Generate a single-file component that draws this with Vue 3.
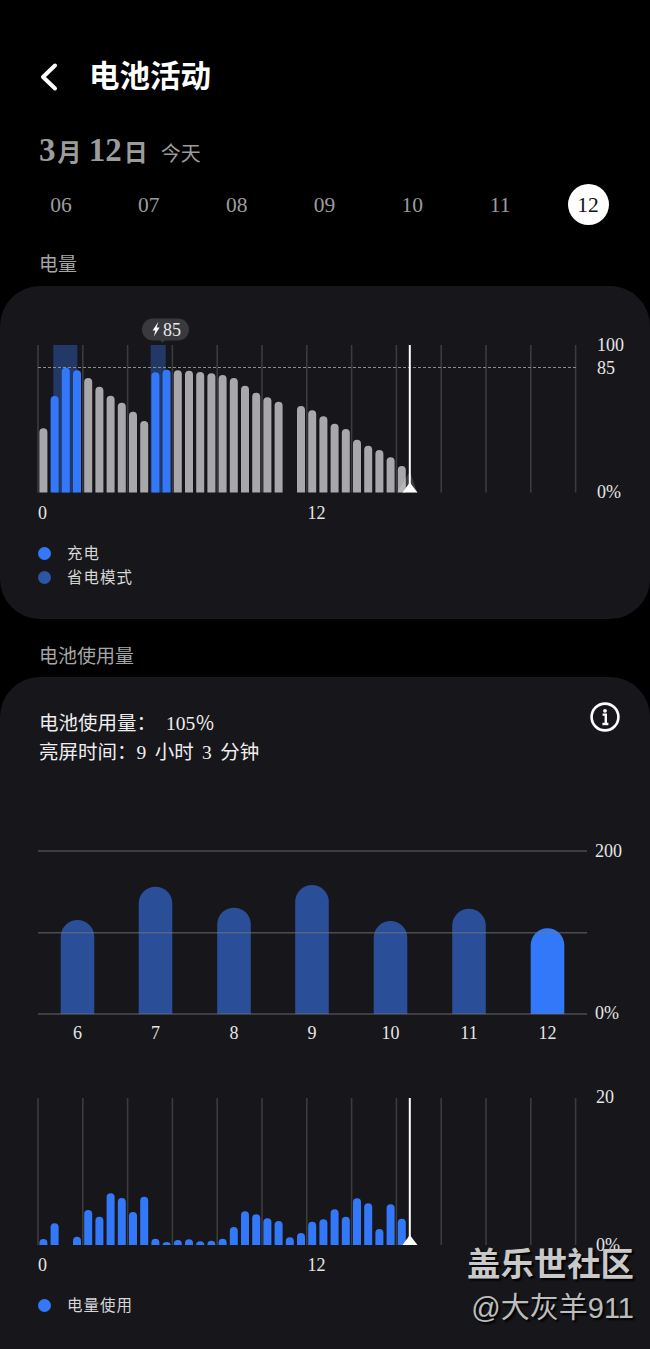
<script setup>
const days = ['06', '07', '08', '09', '10', '11', '12']

const gridX = Array.from({ length: 13 }, (_, i) => 38 + i * 44.8)

// y of each half-hour bar top, null = no data
const levelTops = [428.3, 396, 367.7, 370.3, 378, 386.7, 395.7, 402.7, 411.7, 421, 372.3, 369.7, 370.3, 370.7, 372, 373.3, 375, 378, 385.7, 392.7, 397.3, 401.7, null, 406, 410.3, 416.3, 423.7, 429, 439.7, 445.7, 450, 457.3, 466]
const chargingIdx = [1, 2, 3, 10, 11]

const usageTops = [1239, 1223.3, null, 1236.7, 1210, 1216.7, 1193.3, 1198, 1212, 1196.7, 1238.7, 1242, 1240, 1239.3, 1241.3, 1240.7, 1238.7, 1227, 1211.3, 1214.3, 1218.3, 1221, 1237.3, 1233, 1221.7, 1219.3, 1209.3, 1216.7, 1198.3, 1203.3, 1229, 1204.3, 1218.7]

const weekBars = [
  { label: '6', x: 77.5, top: 920 },
  { label: '7', x: 155.5, top: 886.7 },
  { label: '8', x: 234, top: 907.7 },
  { label: '9', x: 312, top: 885 },
  { label: '10', x: 390.5, top: 921 },
  { label: '11', x: 469, top: 908.7 },
  { label: '12', x: 547.5, top: 928.3, current: true },
]

function roundTop(cx, top, base, w) {
  const r = w / 2
  const x = cx - r
  const h = Math.min(r, base - top)
  return `M${x} ${base}V${top + h}A${r} ${h} 0 0 1 ${x + w} ${top + h}V${base}Z`
}

function halfHourBars(tops, base) {
  return tops
    .map((top, i) => (top === null ? null : { i, d: roundTop(43.4 + i * 11.2, top, base, 8) }))
    .filter(Boolean)
}

const levelBars = halfHourBars(levelTops, 492.5)
const usageBars = halfHourBars(usageTops, 1245)
</script>

<template>
  <div class="page">
    <div class="header">
      <svg class="back" width="20" height="30" viewBox="0 0 20 30">
        <path d="M16 3.5 4 15 16 26.5" fill="none" stroke="#fff" stroke-width="4" stroke-linecap="round" stroke-linejoin="round" />
      </svg>
      <span class="title">电池活动</span>
    </div>

    <div class="date-row">
      <span class="date">3<span class="date-cjk">月</span> 12<span class="date-cjk">日</span></span>
      <span class="today">今天</span>
    </div>

    <div class="day-strip">
      <div v-for="d in days" :key="d" class="day">
        <span :class="{ active: d === '12' }">{{ d }}</span>
      </div>
    </div>

    <div class="section-title">电量</div>
    <section class="card level-card">
      <svg class="chart" width="650" height="210" viewBox="0 314 650 210">
        <rect x="53.3" y="345" width="24" height="147.5" fill="#2a4f98" opacity=".62" />
        <rect x="150.7" y="345" width="15" height="147.5" fill="#2a4f98" opacity=".62" />
        <line v-for="x in gridX" :key="x" :x1="x" :x2="x" y1="345" y2="492.5" stroke="#3b3b3f" stroke-width="1.6" />
        <path v-for="b in levelBars" :key="b.i" :d="b.d" :fill="chargingIdx.includes(b.i) ? '#3478fa' : '#a8a8ac'" />
        <line x1="38" x2="576" y1="367.5" y2="367.5" stroke="#8c8c8c" stroke-width="1" stroke-dasharray="3 2" />

        <polygon points="410,471 397,492.5 417,492.5" fill="#fff" opacity=".16" />
        <line x1="409.8" x2="409.8" y1="345" y2="490" stroke="#fff" stroke-width="2" />
        <polygon points="409.8,482.5 402.5,492.5 417.5,492.5" fill="#fff" />

        <rect x="142" y="318.5" width="47" height="22" rx="11" fill="#3a3a3e" />
        <path d="M165 340h-5l2.5 3z" fill="#3a3a3e" />
        <path d="M158.4 321.8 152.6 330.4H155.4L153.8 336.4 159.6 327.6H156.6Z" fill="#fff" />
        <text class="tip" x="163" y="336">85</text>

        <text class="tick" x="597" y="351">100</text>
        <text class="tick" x="597" y="373.5">85</text>
        <text class="tick" x="597" y="498">0%</text>
        <text class="tick" x="38" y="519">0</text>
        <text class="tick" x="307.5" y="519">12</text>
      </svg>
      <ul class="legend">
        <li><i class="dot"></i>充电</li>
        <li><i class="dot dim"></i>省电模式</li>
      </ul>
    </section>

    <div class="section-title second">电池使用量</div>
    <section class="card usage-card">
      <div class="summary">
        <div>
          <div>电池使用量： <span class="gap">105％</span></div>
          <div class="screen-time">亮屏时间：9 小时 3 分钟</div>
        </div>
        <svg class="info" width="30" height="30" viewBox="0 0 30 30">
          <circle cx="15" cy="15" r="13.4" fill="none" stroke="#fff" stroke-width="2.6" />
          <circle cx="15" cy="8.8" r="1.9" fill="#fff" />
          <path d="M12.6 12.6H15.8V21.6M12.4 22H18.4" fill="none" stroke="#fff" stroke-width="2.4" />
        </svg>
      </div>

      <svg class="chart week" width="650" height="205" viewBox="0 840 650 205">
        <path v-for="b in weekBars" :key="b.label" :d="roundTop(b.x, b.top, 1014, 33.6)" :fill="b.current ? '#3478fa' : '#2a4f98'" />
        <line v-for="y in [851, 932.7, 1014]" :key="y" x1="38" x2="587" :y1="y" :y2="y" stroke="#77777c" stroke-opacity=".55" stroke-width="1.4" />
        <text class="tick" x="595" y="856.5">200</text>
        <text class="tick" x="595" y="1019">0%</text>
        <text v-for="b in weekBars" :key="'l' + b.label" class="tick mid" :x="b.x" y="1039">{{ b.label }}</text>
      </svg>

      <svg class="chart day-usage" width="650" height="190" viewBox="0 1085 650 190">
        <line v-for="x in gridX" :key="x" :x1="x" :x2="x" y1="1098" y2="1245" stroke="#3b3b3f" stroke-width="1.6" />
        <path v-for="b in usageBars" :key="b.i" :d="b.d" fill="#3478fa" />
        <line x1="409.8" x2="409.8" y1="1098" y2="1243" stroke="#fff" stroke-width="2" />
        <polygon points="409.8,1235 402.5,1245 417.5,1245" fill="#fff" />
        <text class="tick" x="596" y="1103">20</text>
        <text class="tick" x="596" y="1251">0%</text>
        <text class="tick" x="38" y="1270.5">0</text>
        <text class="tick" x="307.5" y="1270.5">12</text>
      </svg>

      <ul class="legend usage-legend">
        <li><i class="dot"></i>电量使用</li>
      </ul>
    </section>

    <div class="watermark">
      <div class="wm-top">盖乐世社区</div>
      <div class="wm-user">@大灰羊911</div>
    </div>
  </div>
</template>

<style>
html, body {
  background: #000;
}
</style>

<style scoped>
.page {
  position: relative;
  display: flex;
  flex-direction: column;
  width: 650px;
  height: 1349px;
  overflow: hidden;
  background: #000;
  font-family: "Liberation Serif", "Noto Sans CJK SC", serif;
  color: #fff;
}
.header {
  display: flex;
  align-items: center;
  height: 50px;
  margin-top: 52px;
  padding-left: 39px;
}
.back {
  display: block;
}
.title {
  margin-left: 30px;
  font-size: 30.5px;
  font-weight: 700;
  line-height: 50px;
}
.date-row {
  display: flex;
  align-items: baseline;
  height: 40px;
  margin-top: 28px;
  padding-left: 39px;
  line-height: 40px;
  color: #9c9c9c;
}
.date {
  font-size: 33px;
  font-weight: 700;
  word-spacing: -1px;
}
.date-cjk {
  margin-left: 2px;
  font-size: 24px;
}
.today {
  margin-left: 13px;
  font-size: 20px;
}
.day-strip {
  display: grid;
  grid-template-columns: repeat(7, 1fr);
  height: 41px;
  margin-top: 14px;
  padding: 0 18px 0 17px;
}
.day {
  display: flex;
  align-items: center;
  justify-content: center;
  font-size: 21.5px;
  color: #9c9c9c;
}
.day span:not(.active) {
  padding-top: 2px;
}
.active {
  width: 41px;
  height: 41px;
  border-radius: 50%;
  background: #fff;
  color: #111;
  line-height: 42px;
  text-align: center;
}
.section-title {
  height: 26px;
  margin-top: 27px;
  padding-left: 39px;
  font-size: 19px;
  line-height: 26px;
  color: #a6a6a6;
}
.section-title.second {
  margin-top: 25px;
}
.card {
  margin-top: 8px;
  background: #17171b;
  border-radius: 40px;
}
.level-card {
  height: 333px;
  padding-top: 28px;
  box-sizing: border-box;
}
.usage-card {
  flex: 1;
  margin-top: 7px;
  padding-top: 32px;
  border-radius: 40px 40px 0 0;
}
.chart {
  display: block;
}
.tick {
  font-size: 18px;
  fill: #e6e6e6;
}
.mid {
  text-anchor: middle;
}
.tip {
  font-size: 18px;
  fill: #e8e8e8;
}
.legend {
  margin: 18px 0 0;
  padding: 0 0 0 38px;
  list-style: none;
  font-size: 15.5px;
  line-height: 23.5px;
  letter-spacing: 1px;
  color: #d6d6d6;
}
.legend li {
  display: flex;
  align-items: center;
}
.dot {
  width: 13px;
  height: 13px;
  margin-right: 16px;
  border-radius: 50%;
  background: #3478fa;
}
.dot.dim {
  background: #2d55a5;
}
.summary {
  display: flex;
  justify-content: space-between;
  align-items: flex-start;
  padding: 0 30px 0 39px;
  font-size: 19.5px;
  line-height: 29px;
  color: #eee;
}
.screen-time {
  word-spacing: 3.5px;
}
.gap {
  margin-left: 5px;
}
.info {
  margin-top: -7px;
}
.week {
  margin-top: 73px;
}
.day-usage {
  margin-top: 40px;
}
.usage-legend {
  margin-top: 19px;
}
.watermark {
  position: absolute;
  top: 1245px;
  right: 16px;
  text-align: right;
  font-family: "Liberation Sans", "Noto Sans CJK SC", sans-serif;
  text-shadow: 2px 2px 2px #000;
}
.wm-top {
  font-size: 33.4px;
  font-weight: 700;
  line-height: 40px;
  color: #c9c9c9;
}
.wm-user {
  margin-top: 3px;
  font-size: 29px;
  line-height: 40px;
  color: #bdbdbd;
}
</style>
